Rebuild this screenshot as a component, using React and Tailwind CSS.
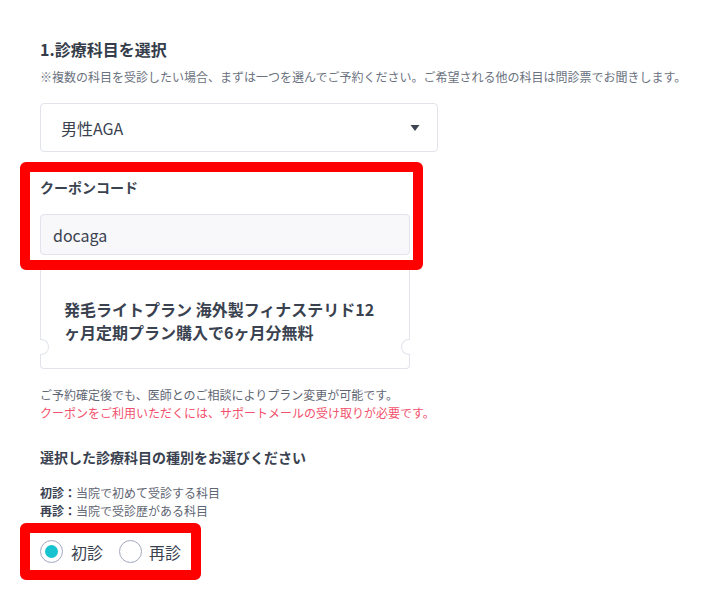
export default function App() {
  return (
    <div
      className="min-h-[591px] w-[705px] bg-white pl-10 pt-[37px] text-[#374151]"
      style={{ fontFamily: '"Noto Sans CJK JP", "Noto Sans", sans-serif' }}
    >
      <h2 className="text-[16px] font-bold leading-6 text-[#353d4a]">1.診療科目を選択</h2>
      <p className="mt-[7px] text-[12px] leading-[18px] text-[#6b7280]">
        ※複数の科目を受診したい場合、まずは一つを選んでご予約ください。ご希望される他の科目は問診票でお聞きします。
      </p>

      <div className="mt-[17px] flex h-[49px] w-[398px] items-center justify-between rounded border border-[#e2e4ec] bg-white pl-5 pr-[16px]">
        <span className="text-[16px] text-[#3a4250]">男性AGA</span>
        <svg width="10" height="8" viewBox="0 0 10 8" className="mr-[1px]">
          <path d="M0.5 1 L9.5 1 L5 7 Z" fill="#3d4553" />
        </svg>
      </div>

      <div className="-ml-5 mt-[10px] w-[403px] rounded-md border-[10px] border-[#ff0000] pb-[5px] pl-[10px] pr-[3px] pt-[5px]">
        <div className="text-[14px] font-bold leading-5 text-[#3a4250]">クーポンコード</div>
        <div className="mt-[17px] flex h-[41px] w-[370px] items-center rounded border border-[#e2e4ec] bg-[#f8f8fa] pl-3 text-[16px] text-[#3a4250]">
          docaga
        </div>
      </div>

      <div className="relative h-[99px] w-[370px] rounded-b border-x border-b border-[#e2e4ec] pl-[23px] pr-[25px] pt-[28px]">
        <p className="text-[16px] font-bold leading-[23px] text-[#3a4250]">
          発毛ライトプラン 海外製フィナステリド12ヶ月定期プラン購入で6ヶ月分無料
        </p>
        <span className="absolute left-[-1px] top-[69px] h-[16px] w-[9px] rounded-r-full border border-l-0 border-[#e2e4ec] bg-white" />
        <span className="absolute right-[-1px] top-[69px] h-[16px] w-[9px] rounded-l-full border border-r-0 border-[#e2e4ec] bg-white" />
      </div>

      <div className="mt-[17px] text-[12px] leading-[18px]">
        <p className="text-[#5f6673]">ご予約確定後でも、医師とのご相談によりプラン変更が可能です。</p>
        <p className="text-[#f2506c]">クーポンをご利用いただくには、サポートメールの受け取りが必要です。</p>
      </div>

      <h3 className="mt-[25px] text-[14px] font-bold leading-5 text-[#3a4250]">
        選択した診療科目の種別をお選びください
      </h3>

      <div className="mt-[17px] text-[12px] leading-[18px] text-[#5f6673]">
        <p>
          <span className="font-bold text-[#3a4250]">初診：</span>当院で初めて受診する科目
        </p>
        <p>
          <span className="font-bold text-[#3a4250]">再診：</span>当院で受診歴がある科目
        </p>
      </div>

      <div className="-ml-5 mt-[3px] inline-flex h-[57px] items-center rounded-md border-[10px] border-[#ff0000] pl-[10px] pr-[10px]">
        <label className="flex items-center">
          <span className="flex h-[23px] w-[23px] items-center justify-center rounded-full border border-[#a3a7bd] bg-white">
            <span className="h-[13px] w-[13px] rounded-full bg-[#17c3cf]" />
          </span>
          <span className="ml-[8px] text-[16px] text-[#3a4250]">初診</span>
        </label>
        <label className="ml-[16px] flex items-center">
          <span className="h-[23px] w-[23px] rounded-full border border-[#a3a7bd] bg-white" />
          <span className="ml-[7px] text-[16px] text-[#3a4250]">再診</span>
        </label>
      </div>
    </div>
  );
}
